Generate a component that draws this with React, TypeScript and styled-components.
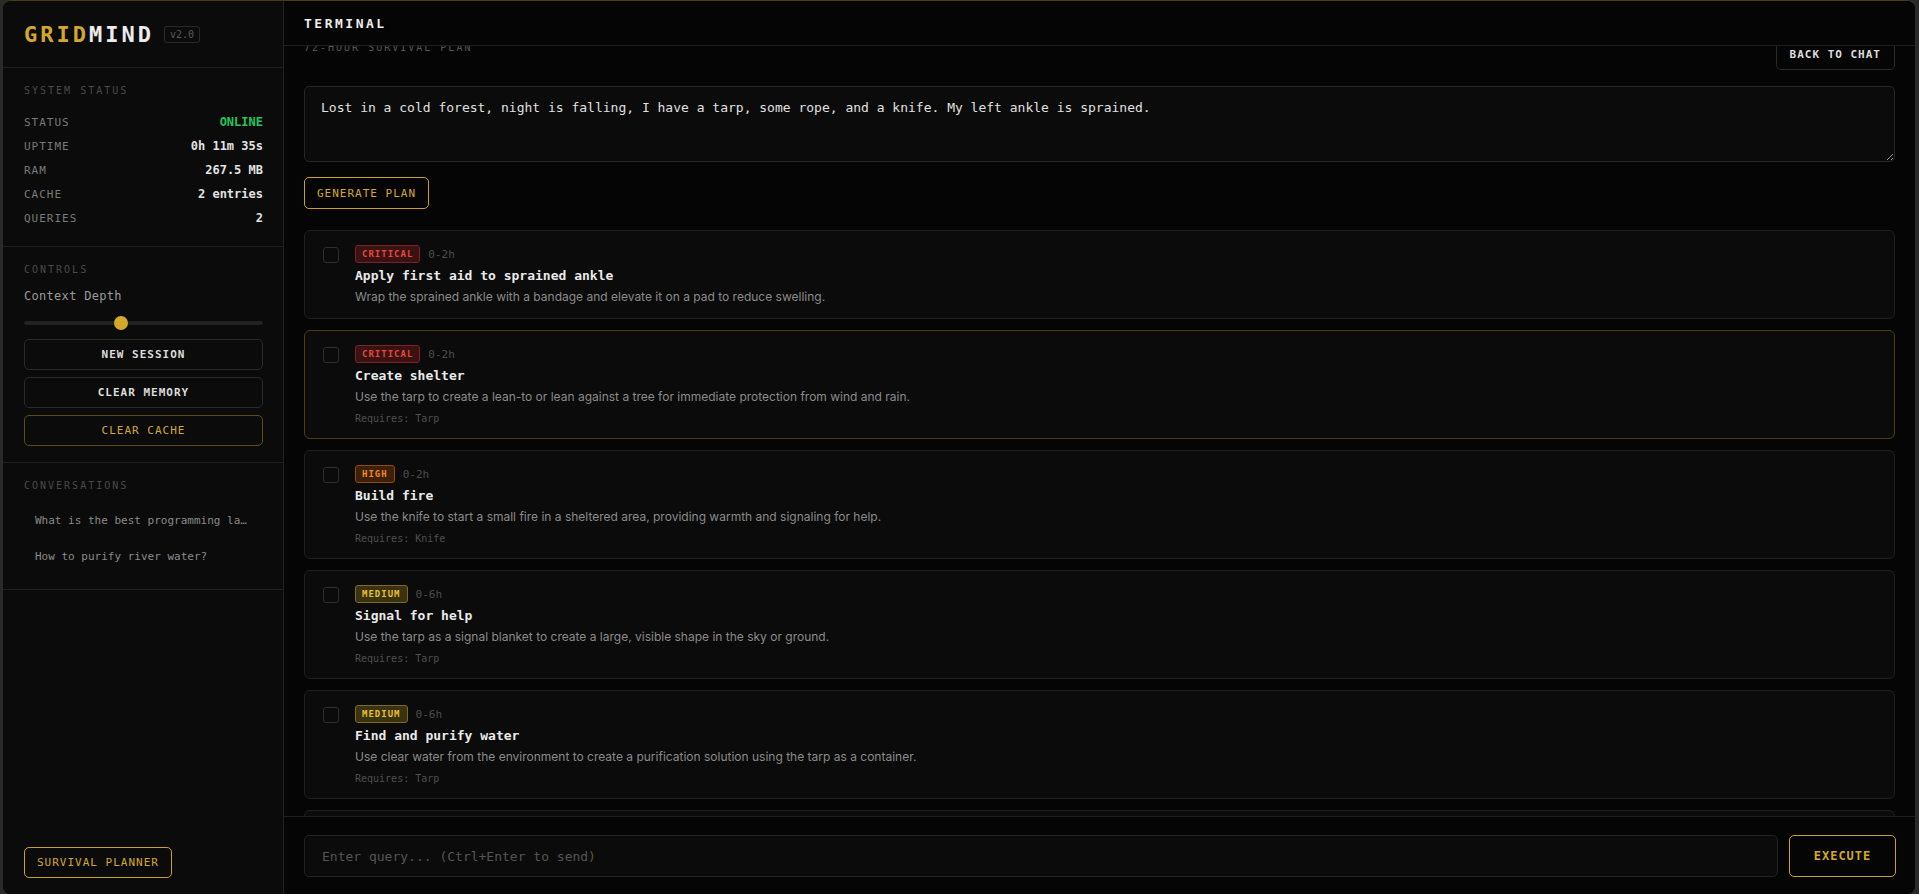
import * as React from "react";
import styled, { createGlobalStyle, css } from "styled-components";

type Level = "critical" | "high" | "medium" | "low";

interface IPlanStep {
  level: Level;
  window: string;
  title: string;
  description: string;
  requires?: string;
  active?: boolean;
}

const STEPS: IPlanStep[] = [
  {
    level: "critical",
    window: "0-2h",
    title: "Apply first aid to sprained ankle",
    description: "Wrap the sprained ankle with a bandage and elevate it on a pad to reduce swelling.",
  },
  {
    level: "critical",
    window: "0-2h",
    title: "Create shelter",
    description:
      "Use the tarp to create a lean-to or lean against a tree for immediate protection from wind and rain.",
    requires: "Tarp",
    active: true,
  },
  {
    level: "high",
    window: "0-2h",
    title: "Build fire",
    description:
      "Use the knife to start a small fire in a sheltered area, providing warmth and signaling for help.",
    requires: "Knife",
  },
  {
    level: "medium",
    window: "0-6h",
    title: "Signal for help",
    description: "Use the tarp as a signal blanket to create a large, visible shape in the sky or ground.",
    requires: "Tarp",
  },
  {
    level: "medium",
    window: "0-6h",
    title: "Find and purify water",
    description:
      "Use clear water from the environment to create a purification solution using the tarp as a container.",
    requires: "Tarp",
  },
  {
    level: "medium",
    window: "6-24h",
    title: "Insulate sleeping area",
    description: "Gather dry leaves and pine needles to build a thick bed that keeps your body off the cold ground.",
    requires: "Rope",
  },
  {
    level: "low",
    window: "24-72h",
    title: "Ration energy and rest",
    description: "Limit movement on the injured ankle and rest during the warmest hours of the day.",
  },
];

const STATUS_ROWS = [
  { label: "STATUS", value: "ONLINE", online: true },
  { label: "UPTIME", value: "0h 11m 35s" },
  { label: "RAM", value: "267.5 MB" },
  { label: "CACHE", value: "2 entries" },
  { label: "QUERIES", value: "2" },
];

const CONVERSATIONS = ["What is the best programming language for beginners?", "How to purify river water?"];

const GOLD = "#d4a82a";
const MONO = `"DejaVu Sans Mono", "Liberation Mono", monospace`;

const GlobalStyle = createGlobalStyle`
  html, body {
    margin: 0;
    padding: 0;
    height: 100%;
    overflow: hidden;
    background: #2a2a2a;
  }
  body {
    font-family: ${MONO};
    color: #e6e6e6;
  }
  * {
    box-sizing: border-box;
  }
`;

const Shell = styled.div`
  display: grid;
  grid-template-columns: 281px 1fr;
  height: 100vh;
  margin: 0 4px 0 3px;
  border-top: 1px solid #4a3b12;
  border-radius: 8px;
  overflow: hidden;
  background: #050505;
`;

/* ---------- sidebar ---------- */

const Sidebar = styled.aside`
  display: flex;
  flex-direction: column;
  min-height: 0;
  background: #0b0b0b;
  border-right: 1px solid #222;
`;

const LogoBlock = styled.div`
  display: flex;
  align-items: center;
  height: 67px;
  padding: 0 20px 0 21px;
  border-bottom: 1px solid #1f1f1f;
`;

const Logo = styled.div`
  font-size: 22px;
  font-weight: 700;
  letter-spacing: 3px;
  color: #ececec;

  span {
    color: ${GOLD};
  }
`;

const Version = styled.span`
  margin-left: 10px;
  padding: 2px 5px;
  font-size: 10px;
  color: #5a5a5a;
  border: 1px solid #2a2a2a;
  border-radius: 3px;
`;

const Section = styled.section<{ $bottom?: number }>`
  padding: 16px 20px ${(p) => p.$bottom ?? 16}px 21px;
  border-bottom: 1px solid #1f1f1f;
`;

const SectionTitle = styled.h3<{ $gap?: number }>`
  margin: 0 0 ${(p) => p.$gap ?? 12}px;
  font-size: 10px;
  font-weight: 400;
  line-height: 14px;
  letter-spacing: 2px;
  color: #4a4a4a;
`;

const StatRow = styled.div`
  display: flex;
  align-items: center;
  justify-content: space-between;
  height: 24px;
`;

const StatLabel = styled.span`
  font-size: 11px;
  letter-spacing: 1px;
  color: #7a7a7a;
`;

const StatValue = styled.span<{ $online?: boolean }>`
  font-size: 12px;
  font-weight: 700;
  color: ${(p) => (p.$online ? "#22c55e" : "#e2e2e2")};
`;

const FieldLabel = styled.div`
  font-size: 12px;
  line-height: 14px;
  letter-spacing: 0.3px;
  color: #9a9a9a;
`;

const Range = styled.input.attrs({ type: "range" })`
  -webkit-appearance: none;
  appearance: none;
  display: block;
  width: 100%;
  height: 14px;
  margin: 13px 0 9px;
  background: transparent;

  &::-webkit-slider-runnable-track {
    height: 4px;
    background: #222;
    border-radius: 2px;
  }

  &::-webkit-slider-thumb {
    -webkit-appearance: none;
    width: 14px;
    height: 14px;
    margin-top: -5px;
    border: none;
    border-radius: 50%;
    background: ${GOLD};
  }
`;

const ButtonStack = styled.div`
  display: flex;
  flex-direction: column;
  gap: 7px;
`;

const SideButton = styled.button<{ $gold?: boolean }>`
  height: 31px;
  width: 100%;
  background: transparent;
  border: 1px solid #2a2a2a;
  border-radius: 5px;
  font-family: ${MONO};
  font-size: 11px;
  font-weight: 700;
  letter-spacing: 1px;
  color: #dcdcdc;
  cursor: pointer;

  ${(p) =>
    p.$gold &&
    css`
      border-color: #5c4a18;
      color: #cfa838;
      font-weight: 400;
    `}
`;

const ConvItem = styled.div`
  height: 36px;
  padding: 0 14px 0 11px;
  line-height: 36px;
  font-size: 11px;
  color: #8a8a8a;
  white-space: nowrap;
  overflow: hidden;
  text-overflow: ellipsis;
  cursor: pointer;
`;

const SidebarFooter = styled.div`
  margin-top: auto;
  padding: 0 20px 16px 21px;
`;

const GoldButton = styled.button<{ $height?: number }>`
  height: ${(p) => p.$height ?? 31}px;
  padding: 0 12px;
  background: transparent;
  border: 1px solid #c9a227;
  border-radius: 5px;
  font-family: ${MONO};
  font-size: 11px;
  letter-spacing: 1px;
  color: ${GOLD};
  cursor: pointer;
`;

/* ---------- main ---------- */

const Main = styled.main`
  display: flex;
  flex-direction: column;
  min-width: 0;
  min-height: 0;
  background: #050505;
`;

const TopBar = styled.header`
  display: flex;
  align-items: center;
  height: 45px;
  flex-shrink: 0;
  padding: 0 20px;
  border-bottom: 1px solid #1f1f1f;
  font-size: 13px;
  font-weight: 700;
  letter-spacing: 2.5px;
  color: #ececec;
`;

const ScrollArea = styled.div`
  flex: 1;
  min-height: 0;
  overflow-y: auto;
  padding: 20px;

  &::-webkit-scrollbar {
    width: 6px;
  }
  &::-webkit-scrollbar-track {
    background: transparent;
  }
  &::-webkit-scrollbar-thumb {
    background: #2a2a2a;
    border-radius: 3px;
  }
`;

const PlanHeader = styled.div`
  display: flex;
  align-items: flex-start;
  justify-content: space-between;
  margin-bottom: 16px;
`;

const PlanTitle = styled.h2`
  margin: 0;
  font-size: 10px;
  font-weight: 400;
  line-height: 20px;
  letter-spacing: 2px;
  color: #555;
`;

const GhostButton = styled.button`
  height: 32px;
  padding: 0 13px;
  background: transparent;
  border: 1px solid #2a2a2a;
  border-radius: 5px;
  font-family: ${MONO};
  font-size: 11px;
  font-weight: 700;
  letter-spacing: 1px;
  color: #dcdcdc;
  cursor: pointer;
`;

const Scenario = styled.textarea`
  display: block;
  width: 100%;
  height: 76px;
  padding: 13px 16px;
  background: #0b0b0b;
  border: 1px solid #262626;
  border-radius: 5px;
  outline: none;
  resize: vertical;
  font-family: ${MONO};
  font-size: 13px;
  line-height: 16px;
  color: #e0e0e0;
`;

const GenerateRow = styled.div`
  margin: 15px 0 21px;
`;

const StepList = styled.div`
  display: flex;
  flex-direction: column;
  gap: 11px;
`;

const StepCard = styled.div<{ $active?: boolean }>`
  display: flex;
  gap: 16px;
  padding: 14px 18px 12px;
  background: #0b0b0b;
  border: 1px solid ${(p) => (p.$active ? "#4a3c14" : "#1f1f1f")};
  border-radius: 6px;
`;

const Check = styled.span`
  flex-shrink: 0;
  width: 16px;
  height: 16px;
  margin-top: 2px;
  border: 1.5px solid #2e2e2e;
  border-radius: 3px;
`;

const StepBody = styled.div`
  flex: 1;
  min-width: 0;
`;

const MetaRow = styled.div`
  display: flex;
  align-items: center;
  gap: 8px;
  height: 18px;
`;

const BADGE: Record<Level, { bg: string; border: string; fg: string }> = {
  critical: { bg: "#3a1212", border: "#7a2424", fg: "#e5483e" },
  high: { bg: "#3d2008", border: "#8f4b12", fg: "#f0882a" },
  medium: { bg: "#3a3210", border: "#7d6a1a", fg: "#e5c02e" },
  low: { bg: "#0f2a1a", border: "#1f5a34", fg: "#3ccf70" },
};

const Badge = styled.span<{ $level: Level }>`
  height: 18px;
  padding: 0 6px;
  line-height: 16px;
  font-size: 9px;
  font-weight: 700;
  letter-spacing: 1px;
  border-radius: 3px;
  background: ${(p) => BADGE[p.$level].bg};
  border: 1px solid ${(p) => BADGE[p.$level].border};
  color: ${(p) => BADGE[p.$level].fg};
`;

const TimeWindow = styled.span`
  font-size: 11px;
  color: #4d4d4d;
`;

const StepTitle = styled.div`
  margin-top: 4px;
  font-size: 13px;
  font-weight: 700;
  line-height: 17px;
  color: #eaeaea;
`;

const StepText = styled.div`
  margin-top: 4px;
  font-family: "Inter", "Liberation Sans", sans-serif;
  font-size: 12px;
  line-height: 18px;
  color: #8a8a8a;
`;

const Requires = styled.div`
  margin-top: 6px;
  font-size: 10px;
  line-height: 14px;
  color: #4f4f4f;
`;

const Composer = styled.footer`
  display: flex;
  gap: 11px;
  flex-shrink: 0;
  padding: 18px 19px 17px 20px;
  border-top: 1px solid #1f1f1f;
`;

const QueryInput = styled.input`
  flex: 1;
  height: 42px;
  padding: 0 17px;
  background: #0b0b0b;
  border: 1px solid #222;
  border-radius: 5px;
  outline: none;
  font-family: ${MONO};
  font-size: 13px;
  color: #e0e0e0;

  &::placeholder {
    color: #555;
  }
`;

const ExecuteButton = styled.button`
  width: 107px;
  height: 42px;
  background: transparent;
  border: 1px solid #c9a227;
  border-radius: 5px;
  font-family: ${MONO};
  font-size: 12px;
  font-weight: 700;
  letter-spacing: 1px;
  color: ${GOLD};
  cursor: pointer;
`;

const PlanStep: React.FC<{ step: IPlanStep }> = ({ step }) => (
  <StepCard $active={step.active}>
    <Check />
    <StepBody>
      <MetaRow>
        <Badge $level={step.level}>{step.level.toUpperCase()}</Badge>
        <TimeWindow>{step.window}</TimeWindow>
      </MetaRow>
      <StepTitle>{step.title}</StepTitle>
      <StepText>{step.description}</StepText>
      {step.requires && <Requires>Requires: {step.requires}</Requires>}
    </StepBody>
  </StepCard>
);

export default function App() {
  const scrollRef = React.useRef<HTMLDivElement>(null);
  const [depth, setDepth] = React.useState(5);

  React.useLayoutEffect(() => {
    if (scrollRef.current) scrollRef.current.scrollTop = 28;
  }, []);

  return (
    <>
      <GlobalStyle />
      <Shell>
        <Sidebar>
          <LogoBlock>
            <Logo>
              <span>GRID</span>MIND
            </Logo>
            <Version>v2.0</Version>
          </LogoBlock>

          <Section>
            <SectionTitle>SYSTEM STATUS</SectionTitle>
            {STATUS_ROWS.map((row) => (
              <StatRow key={row.label}>
                <StatLabel>{row.label}</StatLabel>
                <StatValue $online={row.online}>{row.value}</StatValue>
              </StatRow>
            ))}
          </Section>

          <Section>
            <SectionTitle>CONTROLS</SectionTitle>
            <FieldLabel>Context Depth</FieldLabel>
            <Range min={1} max={11} value={depth} onChange={(e) => setDepth(Number(e.target.value))} />
            <ButtonStack>
              <SideButton>NEW SESSION</SideButton>
              <SideButton>CLEAR MEMORY</SideButton>
              <SideButton $gold>CLEAR CACHE</SideButton>
            </ButtonStack>
          </Section>

          <Section $bottom={14}>
            <SectionTitle $gap={10}>CONVERSATIONS</SectionTitle>
            {CONVERSATIONS.map((c) => (
              <ConvItem key={c}>{c}</ConvItem>
            ))}
          </Section>

          <SidebarFooter>
            <GoldButton>SURVIVAL PLANNER</GoldButton>
          </SidebarFooter>
        </Sidebar>

        <Main>
          <TopBar>TERMINAL</TopBar>
          <ScrollArea ref={scrollRef}>
            <PlanHeader>
              <PlanTitle>72-HOUR SURVIVAL PLAN</PlanTitle>
              <GhostButton>BACK TO CHAT</GhostButton>
            </PlanHeader>
            <Scenario defaultValue="Lost in a cold forest, night is falling, I have a tarp, some rope, and a knife. My left ankle is sprained." />
            <GenerateRow>
              <GoldButton $height={32}>GENERATE PLAN</GoldButton>
            </GenerateRow>
            <StepList>
              {STEPS.map((s) => (
                <PlanStep key={s.title} step={s} />
              ))}
            </StepList>
          </ScrollArea>
          <Composer>
            <QueryInput placeholder="Enter query... (Ctrl+Enter to send)" />
            <ExecuteButton>EXECUTE</ExecuteButton>
          </Composer>
        </Main>
      </Shell>
    </>
  );
}
